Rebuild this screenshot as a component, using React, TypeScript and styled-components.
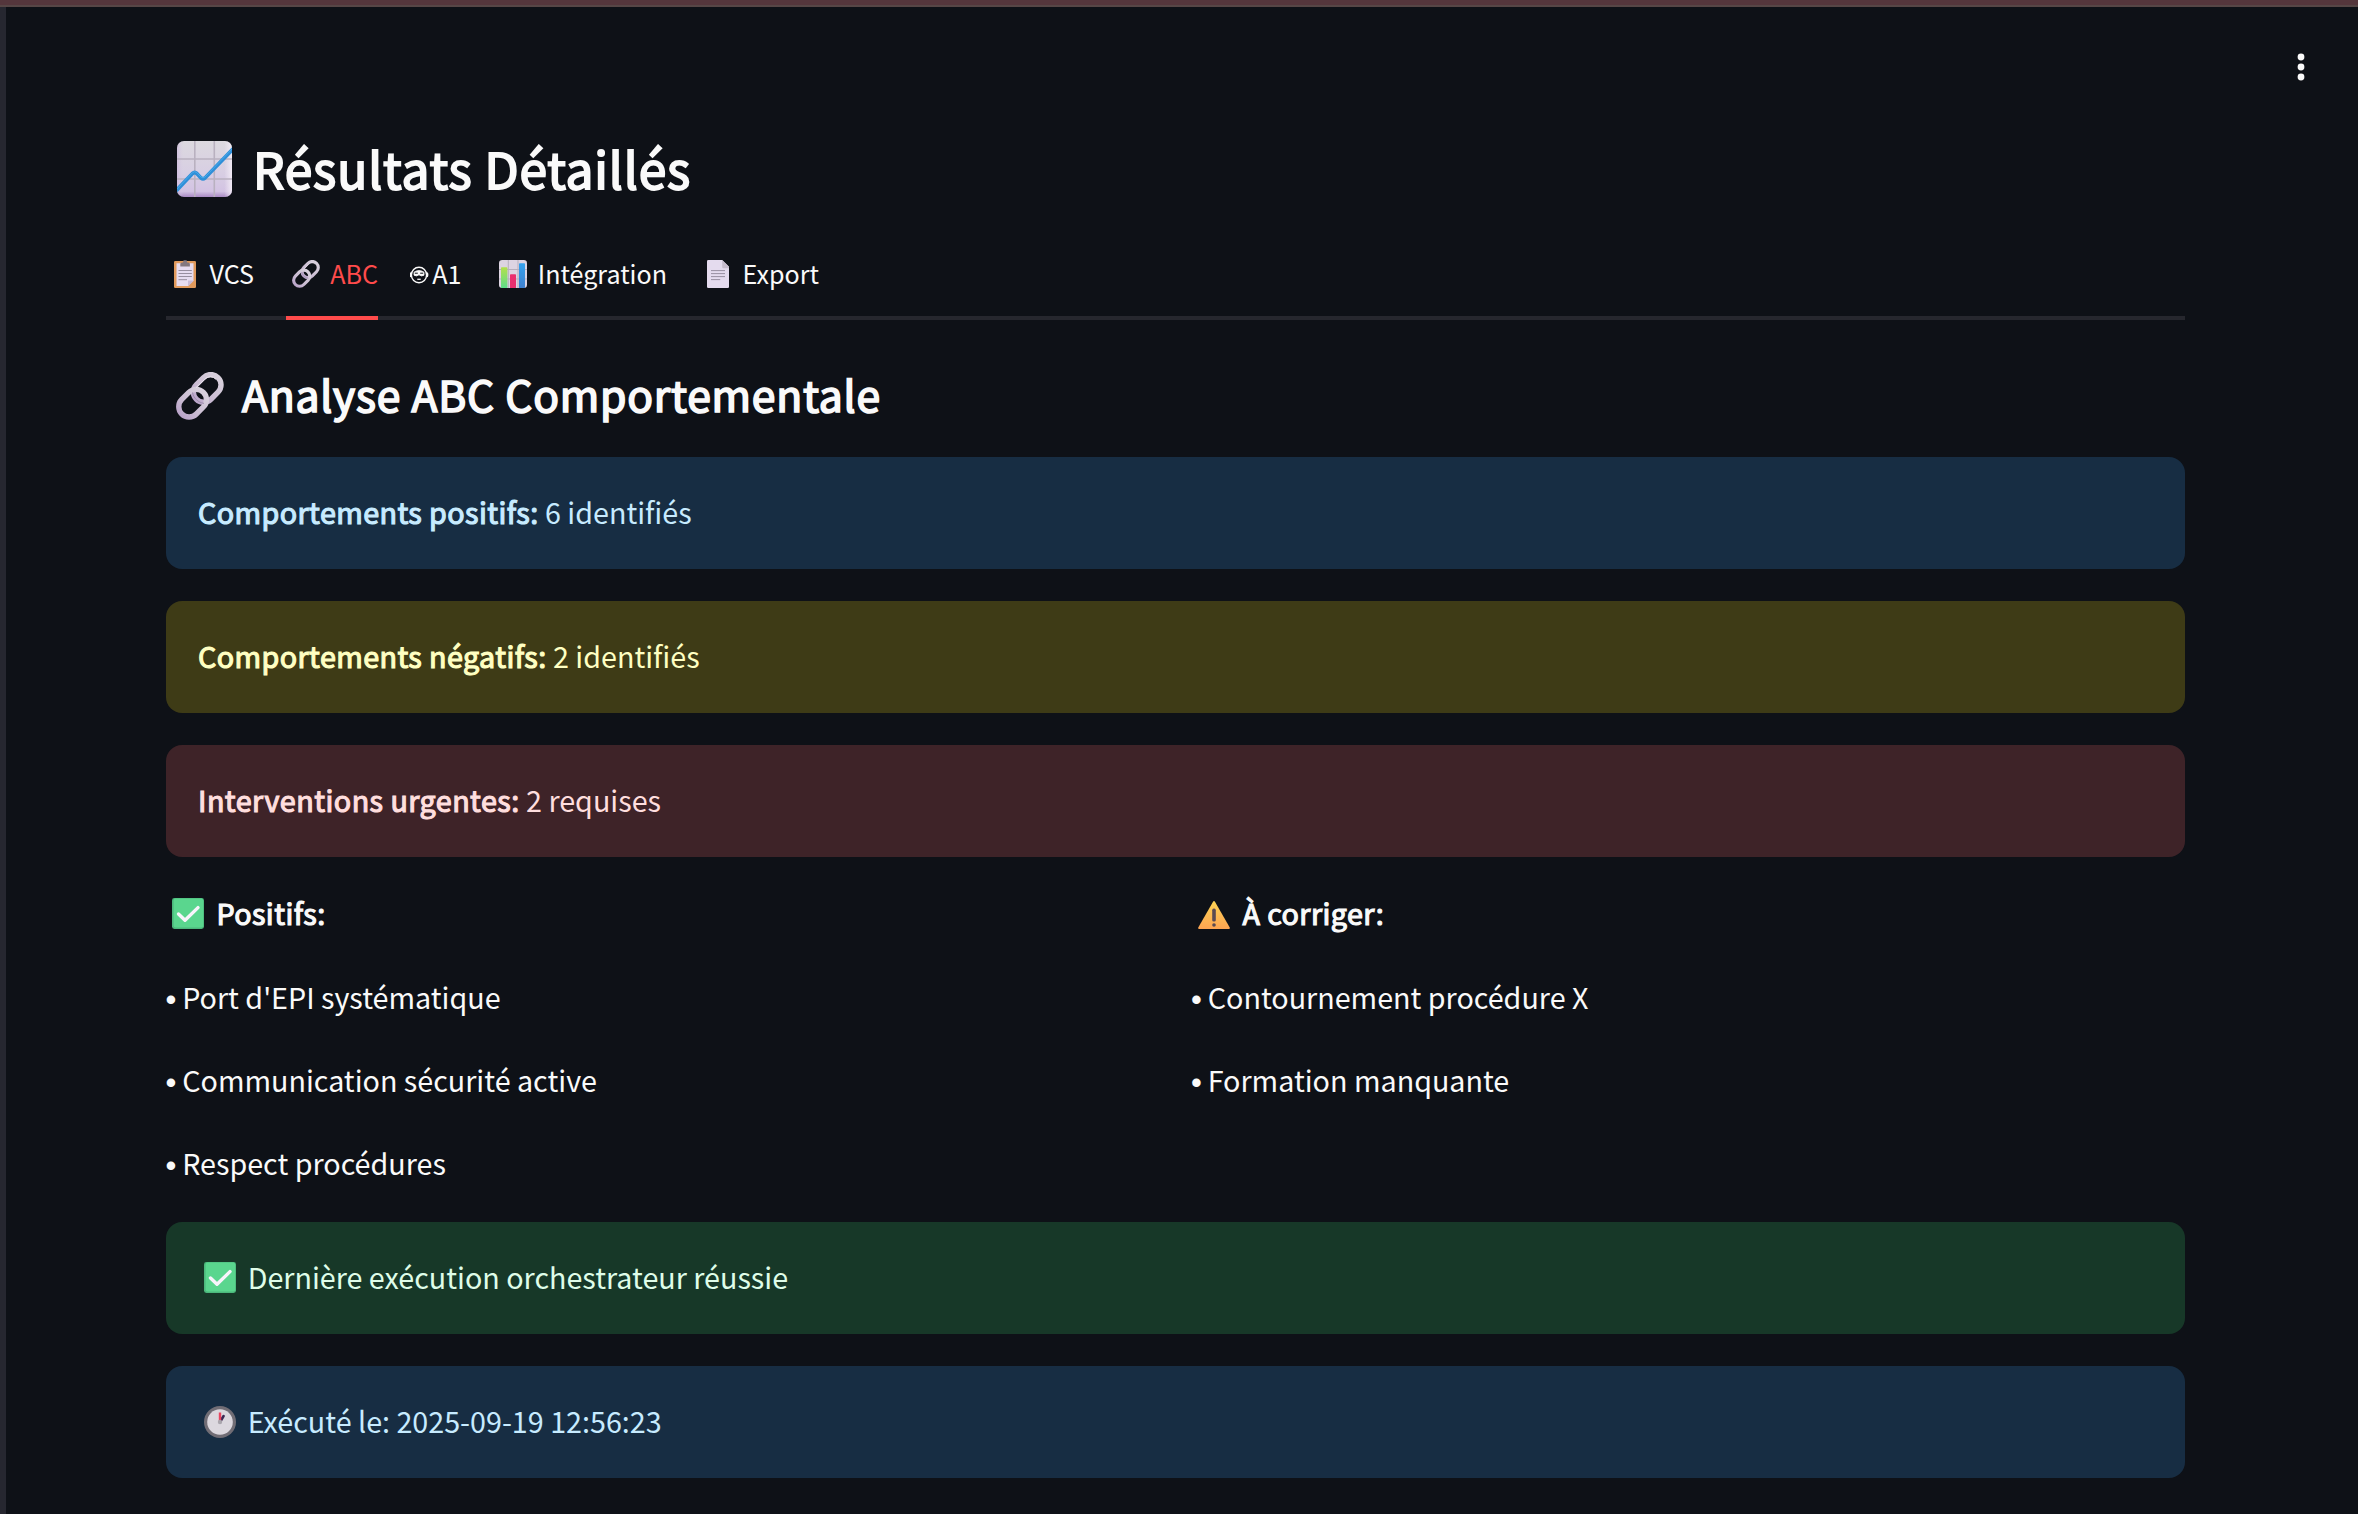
import React from "react";
import styled, { createGlobalStyle } from "styled-components";

const GlobalStyle = createGlobalStyle`
  html, body { margin: 0; background: #0e1117; }
  body { overflow: hidden; }
  * { box-sizing: border-box; }
`;

const Shell = styled.div`
  display: grid;
  grid-template: 7px 1507px / 6px 1fr;
  width: 2358px;
  height: 1514px;
  background: #0e1117;
  color: #fafafa;
  font-family: "Noto Sans CJK SC", "Noto Sans", sans-serif;
  font-size: 28.7px;
  line-height: 51.2px;
`;
const TopBar = styled.div`
  grid-column: 1 / 3;
  background: #54363c;
  border-bottom: 2px solid #564646;
`;
const SidebarEdge = styled.div`
  background: #262730;
`;
const Main = styled.main`
  position: relative;
  padding: 126px 173px 0 160px;
  display: flex;
  flex-direction: column;
`;
const MenuButton = styled.button`
  position: absolute;
  top: 44px;
  right: 41px;
  width: 32px;
  height: 32px;
  padding: 0;
  border: 0;
  background: none;
  color: #fafafa;
`;
const Semi = styled.span<{ $stroke?: number; $track?: number }>`
  font-weight: 400;
  -webkit-text-stroke: ${(p) => p.$stroke ?? 1.15}px currentColor;
  letter-spacing: ${(p) => p.$track ?? 0.42}px;
`;
const IconSlot = styled.span<{ $w: number; $pad: number; $h: number; $lift?: number }>`
  flex: none;
  display: flex;
  width: ${(p) => p.$w}px;
  height: ${(p) => p.$h}px;
  padding-left: ${(p) => p.$pad}px;
  margin-top: ${(p) => p.$lift ?? 0}px;
  svg { display: block; height: 100%; width: auto; flex: none; }
`;
const Title = styled.h2`
  display: flex;
  align-items: flex-start;
  height: 68px;
  margin: 0 0 52px;
  font-size: 49.6px;
  line-height: 68px;
`;
const Tabs = styled.div`
  display: flex;
  gap: 32px;
  height: 67px;
  border-bottom: 4px solid #26272e;
`;
const Tab = styled.div<{ $w: number; $active?: boolean }>`
  display: flex;
  flex: none;
  width: ${(p) => p.$w}px;
  height: 67px;
  border-bottom: 4px solid ${(p) => (p.$active ? "#ff4b4b" : "transparent")};
  color: ${(p) => (p.$active ? "#ff4b4b" : "#fafafa")};
  font-size: 25.1px;
  line-height: 40px;
  white-space: nowrap;
`;
const Heading = styled.h3`
  display: flex;
  height: 58px;
  margin: 44px 0 35px;
  font-size: 42.6px;
  line-height: 59px;
`;
const Stack = styled.div`
  display: flex;
  flex-direction: column;
  gap: 32px;
`;
const tones = {
  info: ["#172d43", "#c7ebff"],
  warning: ["#3e3b16", "#ffffc2"],
  error: ["#3e2328", "#ffdede"],
  success: ["#173828", "#dffde9"],
};
const Alert = styled.div<{ $tone: keyof typeof tones }>`
  display: flex;
  gap: 6.4px;
  height: 112px;
  padding: 30px 32px 0;
  border-radius: 16px;
  background: ${(p) => tones[p.$tone][0]};
  color: ${(p) => tones[p.$tone][1]};
  line-height: 49px;
  white-space: nowrap;
`;
const Columns = styled.div`
  display: grid;
  grid-template-columns: 1fr 1fr;
  gap: 32px;
  height: 301px;
  margin: 30.35px 0 33.65px;
`;
const Column = styled.div`
  display: flex;
  flex-direction: column;
  gap: 32px;
`;
const Line = styled.p`
  display: flex;
  margin: 0;
  height: 51.2px;
`;
const Bullet = styled.span`
  flex: none;
  width: 16.8px;
  margin-left: -0.6px;
  padding-top: 3px;
  font-family: "Liberation Sans", sans-serif;
  font-size: 31px;
`;

const DotsIcon = () => (
  <svg width="32" height="32" viewBox="0 0 32 32" fill="currentColor">
    <circle cx="16" cy="6" r="3.4" />
    <circle cx="16" cy="16" r="3.4" />
    <circle cx="16" cy="26" r="3.4" />
  </svg>
);
const TrendIcon = () => (
  <svg viewBox="0 0 55 56">
    <defs>
      <linearGradient id="paper" x1="0" y1="0" x2="0" y2="1">
        <stop offset="0" stopColor="#dcd9df" />
        <stop offset=".55" stopColor="#d8cfe3" />
        <stop offset=".9" stopColor="#d3c3e3" />
        <stop offset="1" stopColor="#a98ac4" />
      </linearGradient>
      <linearGradient id="side" x1="0" x2="1">
        <stop offset="0" stopColor="#c9b4dc" stopOpacity=".6" />
        <stop offset=".12" stopColor="#d8cfe3" stopOpacity="0" />
        <stop offset=".86" stopColor="#f3ecf6" stopOpacity="0" />
        <stop offset="1" stopColor="#f3ecf6" stopOpacity=".9" />
      </linearGradient>
      <clipPath id="sheet"><rect width="55" height="56" rx="7" /></clipPath>
    </defs>
    <g clipPath="url(#sheet)">
      <rect width="55" height="56" fill="url(#paper)" />
      <rect width="55" height="56" fill="url(#side)" />
      <path d="M17.8 0V56M37.3 0V56M0 18H55M0 38H55" stroke="#b9b1c0" strokeWidth="1.6" />
      <path d="M-2 51 15.5 32.5Q17.7 30.5 19.8 32.5L24 37Q26 38.6 28 37L57 7" fill="none" stroke="#2f8fd8" strokeWidth="3.8" strokeLinejoin="round" />
      <path d="M-2 50 15.5 31.7Q17.7 29.5 19.8 31.7L24 36Q26 37.6 28 36L57 6" fill="none" stroke="#49aaea" strokeWidth="1" />
    </g>
  </svg>
);
const LinkIcon = () => (
  <svg viewBox="0 0 48 48" fill="none">
    <defs>
      <linearGradient id="steel" gradientUnits="userSpaceOnUse" x1="0" y1="-18" x2="0" y2="18">
        <stop offset="0" stopColor="#d9d2dd" />
        <stop offset=".6" stopColor="#cbbdd3" />
        <stop offset="1" stopColor="#b9a3c9" />
      </linearGradient>
    </defs>
    <g stroke="url(#steel)" strokeWidth="5.4">
      <rect x="-10.3" y="-15.3" width="20.6" height="30.6" rx="10.3" transform="translate(31.2 16.4) rotate(45)" />
      <rect x="-10.3" y="-15.3" width="20.6" height="30.6" rx="10.3" transform="translate(16.6 31.2) rotate(45)" />
    </g>
    <path d="M16.5 20.5C17.5 26 22 30.5 28 31.4" stroke="#9d8dab" strokeWidth="1" />
    <path d="M40 7.3A7.6 7.6 0 0 0 28.5 7.5L20 15.6" stroke="#ece6ef" strokeWidth="1" />
  </svg>
);
const ClipboardIcon = () => (
  <svg viewBox="0 0 22 28">
    <rect y="1" width="22" height="27" rx="1.3" fill="#e09a5c" />
    <path d="M2.5 3.2H19.5V20.5L14 26H2.5Z" fill="#e6dcf0" />
    <path d="M19.5 20.5V21L14.5 26H14V20.5Z" fill="#c9bbd6" />
    <path d="M4.5 10.5H17.8M4.5 13.5H17.8M4.5 16.5H17.8M4.5 19.7H13" stroke="#8e8696" strokeWidth=".9" />
    <path d="M6.3 6.4V4Q6.3 2.4 8 2.4H9L9.6.3H12.6L13.2 2.4H14.2Q15.9 2.4 15.9 4V6.4Z" fill="#83787f" />
  </svg>
);
const FaceIcon = () => (
  <svg viewBox="1 0 20 18" fill="none" stroke="#fafafa">
    <ellipse cx="10" cy="9" rx="7.6" ry="7.8" strokeWidth="1.4" />
    <path d="M1.9 6.7Q.8 8.8 1.9 11M18.1 6.7Q19.2 8.8 18.1 11" strokeWidth="1.5" />
    <path d="M5 6.2Q10 2.8 15 6.2V9.2Q12.5 10.8 10 8.8 7.5 10.8 5 9.2Z" fill="#fafafa" strokeWidth=".8" />
    <path d="M5.8 7.2H8.8M11.2 7.2H14.2" stroke="#0e1117" strokeWidth="1" />
    <path d="M8.3 13.3H11.7" strokeWidth="1.3" />
  </svg>
);
const BarsIcon = () => (
  <svg viewBox="0 0 28 28">
    <defs>
      <linearGradient id="lime" x1="0" y1="0" x2="0" y2="1"><stop stopColor="#b3e04b" /><stop offset="1" stopColor="#5fdc8b" /></linearGradient>
      <linearGradient id="azure" x1="0" y1="0" x2="0" y2="1"><stop stopColor="#35a3ee" /><stop offset="1" stopColor="#3f80cf" /></linearGradient>
    </defs>
    <rect width="28" height="28" rx="3.2" fill="#ddd4e2" />
    <path d="M9.3 0V28M19 0V28M0 9.5H28M0 19H28" stroke="#b7afbd" strokeWidth="1" />
    <path d="M2 8Q2 7.2 2.8 7.2H7.6Q8.4 7.2 8.4 8V28H2Z" fill="url(#lime)" />
    <path d="M11 15Q11 14.2 11.8 14.2H16.2Q17 14.2 17 15V28H11Z" fill="#e92f6f" />
    <path d="M20 4Q20 3.2 20.8 3.2H25.2Q26 3.2 26 4V28H20Z" fill="url(#azure)" />
  </svg>
);
const PageIcon = () => (
  <svg viewBox="0 0 22 28">
    <path d="M1.3 0H15.2L22 6.8V26.7Q22 28 20.7 28H1.3Q0 28 0 26.7V1.3Q0 0 1.3 0Z" fill="#e4dbee" />
    <path d="M15.2 0 22 6.8V8.2H16.5Q15.2 8.2 15.2 7Z" fill="#c6bccd" />
    <path d="M4 10.6H18M4 13.6H18M4 16.6H18M4 19.6H13.2" stroke="#908797" strokeWidth=".9" />
  </svg>
);
const CheckIcon = () => (
  <svg viewBox="0 0 32 31">
    <rect width="32" height="31" rx="2.4" fill="#4cb87c" />
    <rect x="1.6" y=".6" width="29.6" height="28.8" rx="2" fill="#5ad68e" />
    <path d="M6.5 16 13 22.2 26 9.6" fill="none" stroke="#f8f4fb" strokeWidth="3.4" strokeLinecap="round" strokeLinejoin="round" />
  </svg>
);
const WarningIcon = () => (
  <svg viewBox="0 0 32 28">
    <defs><linearGradient id="amber" x1="0" y1="0" x2="0" y2="1"><stop stopColor="#fcd354" /><stop offset="1" stopColor="#fda452" /></linearGradient></defs>
    <path d="M14.9.9Q16-.7 17.1.9L31.6 26.2Q32.5 28 30.6 28H1.4Q-.5 28 .4 26.2Z" fill="url(#amber)" />
    <rect x="14.2" y="7.6" width="3.6" height="13" rx="1.6" fill="#5a4a52" />
    <circle cx="16" cy="24" r="1.8" fill="#5a4a52" />
  </svg>
);
const ClockIcon = () => (
  <svg viewBox="0 0 32 32">
    <circle cx="16" cy="16" r="16" fill="#716d75" />
    <circle cx="16" cy="16" r="12.8" fill="#dcd8df" />
    <path d="M16 16 19.6 10" stroke="#3b2a55" strokeWidth="2.6" strokeLinecap="round" />
    <path d="M16 15V6.5" stroke="#e8455f" strokeWidth="2.4" />
    <circle cx="16" cy="16" r="2.2" fill="#aaa6ae" />
  </svg>
);

const positives = ["Port d'EPI systématique", "Communication sécurité active", "Respect procédures"];
const fixes = ["Contournement procédure X", "Formation manquante"];
const Items = ({ list }: { list: string[] }) => (
  <>
    {list.map((text) => (
      <Line key={text}><Bullet>•</Bullet><span>{text}</span></Line>
    ))}
  </>
);

export default function App() {
  return (
    <Shell>
      <GlobalStyle />
      <TopBar />
      <SidebarEdge />
      <Main>
        <MenuButton aria-label="Menu"><DotsIcon /></MenuButton>
        <Title>
          <IconSlot $w={87} $pad={11} $h={56} $lift={8}><TrendIcon /></IconSlot>
          <Semi $stroke={1.9} $track={0.85}>Résultats Détaillés</Semi>
        </Title>
        <Tabs>
          <Tab $w={88}><IconSlot $w={43.6} $pad={8} $h={28} $lift={7}><ClipboardIcon /></IconSlot>VCS</Tab>
          <Tab $w={92} $active><IconSlot $w={44.2} $pad={5.8} $h={28} $lift={7}><LinkIcon /></IconSlot>ABC</Tab>
          <Tab $w={52}><IconSlot $w={22.2} $pad={0} $h={18} $lift={13}><FaceIcon /></IconSlot>A1</Tab>
          <Tab $w={173}><IconSlot $w={43.8} $pad={5} $h={28} $lift={7}><BarsIcon /></IconSlot>Intégration</Tab>
          <Tab $w={120}><IconSlot $w={43.6} $pad={8} $h={28} $lift={7}><PageIcon /></IconSlot>Export</Tab>
        </Tabs>
        <Heading>
          <IconSlot $w={76} $pad={10} $h={48} $lift={7.5}><LinkIcon /></IconSlot>
          <Semi $stroke={1.7} $track={0.78}>Analyse ABC Comportementale</Semi>
        </Heading>
        <Stack>
          <Alert $tone="info"><Semi>Comportements positifs:</Semi><span>6 identifiés</span></Alert>
          <Alert $tone="warning"><Semi>Comportements négatifs:</Semi><span>2 identifiés</span></Alert>
          <Alert $tone="error"><Semi $track={0.47}>Interventions urgentes:</Semi><span>2 requises</span></Alert>
        </Stack>
        <Columns>
          <Column>
            <Line><IconSlot $w={50.4} $pad={6} $h={31} $lift={10.65}><CheckIcon /></IconSlot><Semi>Positifs:</Semi></Line>
            <Items list={positives} />
          </Column>
          <Column>
            <Line><IconSlot $w={51} $pad={6} $h={28} $lift={13.65}><WarningIcon /></IconSlot><Semi>À corriger:</Semi></Line>
            <Items list={fixes} />
          </Column>
        </Columns>
        <Stack>
          <Alert $tone="success"><IconSlot $w={43.3} $pad={6} $h={31} $lift={10}><CheckIcon /></IconSlot><span>Dernière exécution orchestrateur réussie</span></Alert>
          <Alert $tone="info"><IconSlot $w={43.3} $pad={6} $h={32} $lift={10}><ClockIcon /></IconSlot><span>Exécuté le: 2025-09-19 12:56:23</span></Alert>
        </Stack>
      </Main>
    </Shell>
  );
}
